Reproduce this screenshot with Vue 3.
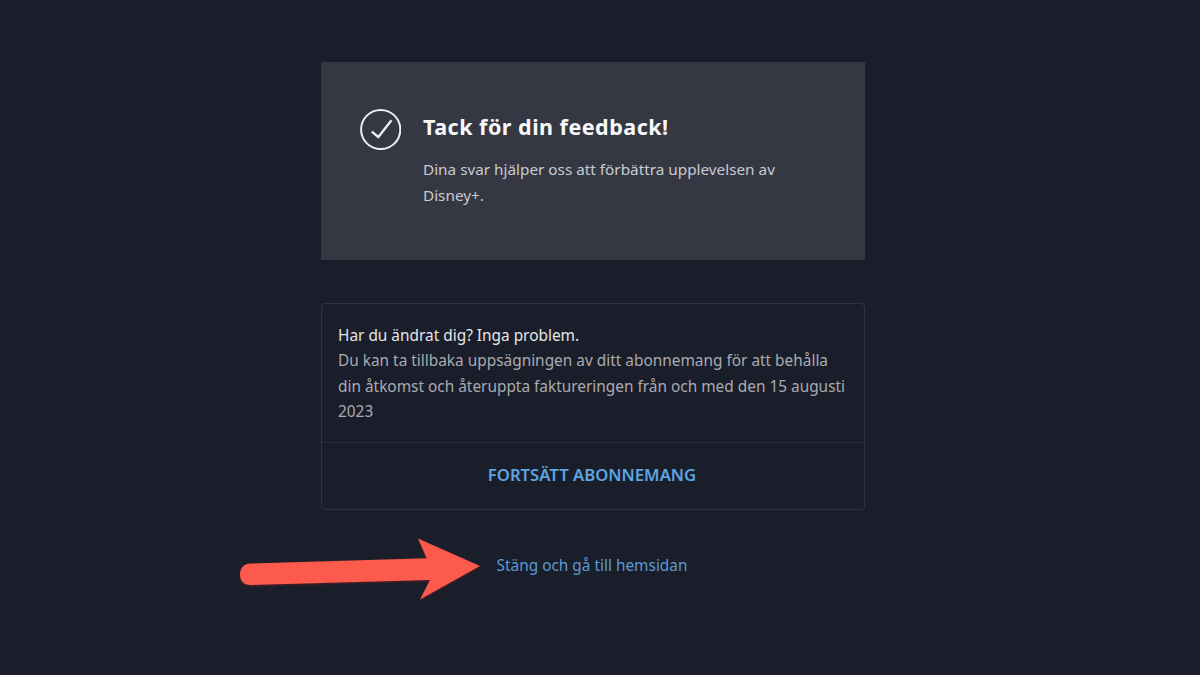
<template>
  <div class="page">
    <div class="column">
      <div class="notice">
        <svg class="check-icon" viewBox="0 0 42 42" fill="none">
          <circle cx="21.700" cy="21.500" r="19.600" stroke="#eeeef0" stroke-width="2" />
          <path d="M12.800 23.700 L19.300 29 L32.500 12.200" stroke="#eeeef0" stroke-width="2.300" />
        </svg>
        <div class="notice-text">
          <h1>Tack för din feedback!</h1>
          <p>Dina svar hjälper oss att förbättra upplevelsen av Disney+.</p>
        </div>
      </div>

      <div class="card">
        <div class="card-body">
          <p class="lead">Har du ändrat dig? Inga problem.</p>
          <p class="detail">Du kan ta tillbaka uppsägningen av ditt abonnemang för att behålla din åtkomst och återuppta faktureringen från och med den 15 augusti 2023</p>
        </div>
        <button class="continue">FORTSÄTT ABONNEMANG</button>
      </div>

      <div class="home-row">
        <a class="home-link">Stäng och gå till hemsidan</a>
        <!-- annotation on top of the screenshot -->
        <svg class="arrow" viewBox="0 0 250 70" fill="none">
          <path
            d="M11 25.500 L186.700 20.300 L178 0.500 L240 28 L180 61.500 L190 42 L11 47 C3 47 0 42 0 36.500 C0 31 3 25.700 11 25.500 Z"
            fill="#fb5a4c"
          />
        </svg>
      </div>
    </div>
  </div>
</template>

<script setup>
</script>

<style>
body {
  background: #1a1e2a;
}
</style>

<style scoped>
.page {
  height: 675px;
  overflow: hidden;
  background: #1a1e2a;
  font-family: "Noto Sans", "Liberation Sans", sans-serif;
  display: flex;
  justify-content: center;
}

.column {
  width: 544px;
  margin-left: -14px;
  padding-top: 62px;
}

.notice {
  height: 198px;
  box-sizing: border-box;
  background: #353843;
  display: flex;
  gap: 22px;
  padding: 46px 40px 0 38px;
}

.check-icon {
  width: 42px;
  height: 42px;
  flex-shrink: 0;
}

.notice-text {
  padding-top: 4px;
  min-width: 0;
}

.notice-text h1 {
  margin: 0 0 14px;
  font-size: 21.500px;
  line-height: 30px;
  font-weight: 700;
  letter-spacing: 0.500px;
  color: #f9f9f9;
}

.notice-text p {
  margin: 0;
  font-size: 15.300px;
  line-height: 26px;
  color: #cacbcf;
}

.card {
  margin-top: 43px;
  height: 207px;
  box-sizing: border-box;
  border: 1px solid #30333e;
  border-radius: 4px;
  display: flex;
  flex-direction: column;
}

.card-body {
  height: 139px;
  box-sizing: border-box;
  padding: 19px 16px 0 16px;
  border-bottom: 1px solid #2b2e39;
  font-size: 15.400px;
  line-height: 25.300px;
}

.card-body p {
  margin: 0;
}

.lead {
  color: #e6e6e8;
}

.detail {
  color: #a9abb1;
}

.continue {
  flex: 1;
  background: none;
  border: 0;
  padding: 0 2px 4px 0;
  font-family: inherit;
  font-size: 16.700px;
  font-weight: 600;
  color: #5da5e2;
}

.home-row {
  position: relative;
  margin-top: 44px;
  padding-right: 2px;
  text-align: center;
  line-height: 22px;
}

.home-link {
  font-size: 15.400px;
  color: #5a9ad2;
}

.arrow {
  position: absolute;
  left: -81px;
  top: -16px;
  width: 250px;
  height: 70px;
  filter: drop-shadow(0 1px 1px rgba(120, 30, 30, 0.6));
}
</style>
